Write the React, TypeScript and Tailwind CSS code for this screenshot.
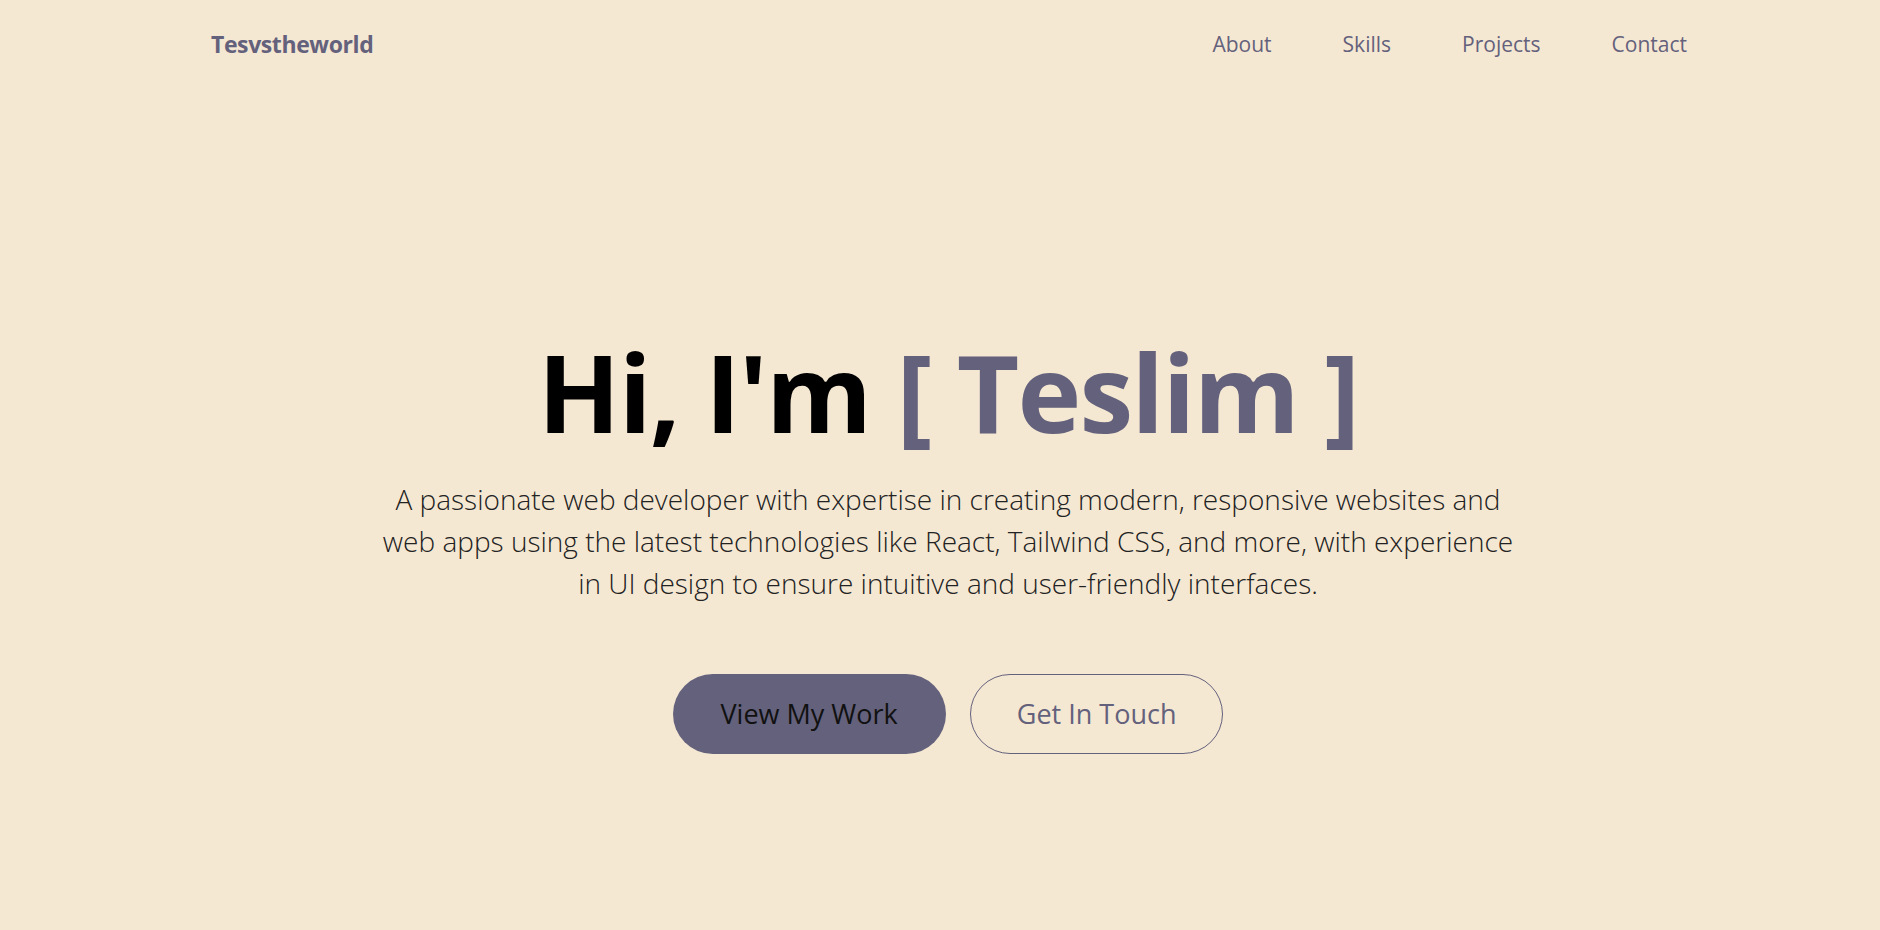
import React from 'react';

const links = ['About', 'Skills', 'Projects', 'Contact'];

export default function App() {
  return (
    <div className="min-h-screen bg-[#f5e8d3] font-['Open_Sans','Noto_Sans',sans-serif] text-black">
      {/* Header */}
      <header className="flex items-center justify-between pl-[211px] pr-[193px] pt-[27px]">
        <a href="#" className="text-[23px] font-bold tracking-[-0.4px] text-[#64617c]">
          Tesvstheworld
        </a>
        <nav className="flex items-center gap-[71px]">
          {links.map((l) => (
            <a key={l} href={`#${l.toLowerCase()}`} className="text-[21px] font-medium text-[#64617c]">
              {l}
            </a>
          ))}
        </nav>
      </header>

      {/* Hero */}
      <section className="flex flex-col items-center pl-4 pt-[276px] text-center">
        <h1 className="text-[108px] font-bold leading-none tracking-[-1.8px]">
          Hi, I'm <span className="text-[#64617c]">[ Teslim ]</span>
        </h1>
        <p className="mt-[32px] max-w-[1140px] text-[28px] font-light leading-[42px] text-[#222]">
          A passionate web developer with expertise in creating modern, responsive websites and web apps
          using the latest technologies like React, Tailwind CSS, and more, with experience in UI design to
          ensure intuitive and user-friendly interfaces.
        </p>
        <div className="mt-[70px] flex items-center gap-6">
          <a href="#projects" className="rounded-full bg-[#64617c] px-12 py-6 text-[27px] font-medium leading-8 text-[#111]">
            View My Work
          </a>
          <a href="#contact" className="rounded-full border border-[#64617c] px-[46px] py-[23px] text-[27px] font-medium leading-8 text-[#64617c]">
            Get In Touch
          </a>
        </div>
      </section>
    </div>
  );
}
